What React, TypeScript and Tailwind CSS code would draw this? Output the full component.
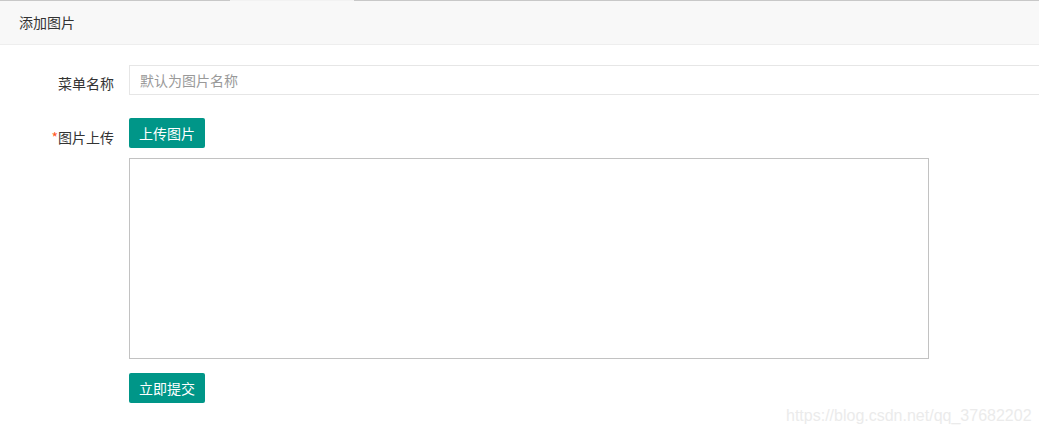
export default function App() {
  return (
    <div
      className="relative h-[434px] w-[1039px] overflow-hidden bg-white text-[14px] text-[#333]"
      style={{ fontFamily: '"Noto Sans CJK SC", "Liberation Sans", sans-serif' }}
    >
      <div className="flex h-px">
        <div className="w-[230px] bg-[#c8c8c8]" />
        <div className="w-[124px] bg-[#f2f2f2]" />
        <div className="flex-1 bg-[#c8c8c8]" />
      </div>
      <div className="flex h-[44px] items-center border-b border-[#eee] bg-[#f8f8f8] px-[19px]">
        添加图片
      </div>

      <form className="pt-5">
        <div className="flex">
          <label className="w-[129px] shrink-0 pr-[15px] pt-[8px] text-right leading-5">
            菜单名称
          </label>
          <input
            type="text"
            placeholder="默认为图片名称"
            className="h-[30px] w-[940px] shrink-0 border border-[#e6e6e6] px-[10px] text-[14px] outline-none placeholder:text-[#999]"
          />
        </div>

        <div className="mt-[23px] flex">
          <label className="w-[129px] shrink-0 pr-[15px] pt-[9px] text-right leading-5">
            <span className="text-[#ff5722]">*</span>图片上传
          </label>
          <div className="flex flex-col">
            <button
              type="button"
              className="h-[30px] w-[76px] rounded-[2px] bg-[#009688] text-[14px] text-white"
            >
              上传图片
            </button>
            <div className="mt-[10px] h-[201px] w-[800px] border border-[#c2c2c2]" />
            <button
              type="button"
              className="mt-[14px] h-[30px] w-[76px] rounded-[2px] bg-[#009688] text-[14px] text-white"
            >
              立即提交
            </button>
          </div>
        </div>
      </form>

      <div
        className="absolute left-[786px] top-[404px] text-[16px] text-[#ebebeb]"
        style={{ fontFamily: '"Liberation Sans", Arial, sans-serif' }}
      >
        https://blog.csdn.net/qq_37682202
      </div>
    </div>
  );
}
